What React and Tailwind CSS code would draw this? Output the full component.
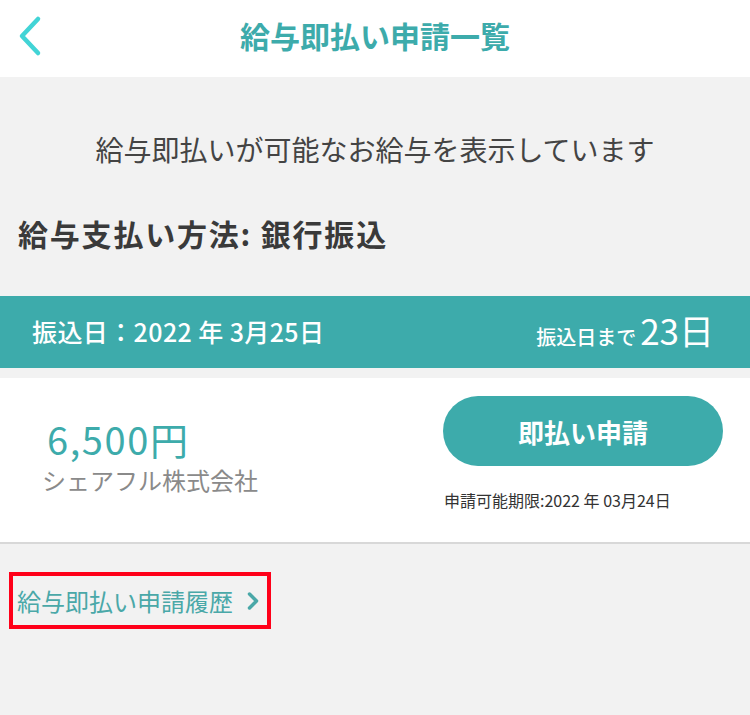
import { ChevronRight } from "lucide-react";

const font = { fontFamily: '"Noto Sans CJK JP", "Noto Sans", sans-serif' };

function BackIcon() {
  return (
    <svg width="28" height="42" viewBox="0 0 28 42" fill="none">
      <path d="M22 4 L6 21 L22 38" stroke="#42d4d6" strokeWidth="4.5" strokeLinecap="round" strokeLinejoin="round" />
    </svg>
  );
}

export default function App() {
  return (
    <div className="w-[750px] h-[715px] bg-[#f2f2f2] overflow-hidden" style={font}>
      {/* header */}
      <div className="grid grid-cols-[70px_1fr_70px] items-center h-[77px] bg-white">
        <div className="pl-[16px] pb-[6px] flex items-center">
          <BackIcon />
        </div>
        <h1 className="text-center text-[30px] font-bold text-[#3dabab] leading-none pb-[8px]">給与即払い申請一覧</h1>
        <div />
      </div>

      {/* intro */}
      <p className="pt-[52px] text-center text-[28px] leading-[40px] text-[#444]">給与即払いが可能なお給与を表示しています</p>
      <p className="mt-[44px] pl-[18px] text-[30px] leading-[40px] font-bold text-[#3a3a3a] tracking-[1.8px]">給与支払い方法: 銀行振込</p>

      {/* date band */}
      <div className="mt-[43px] h-[72px] bg-[#3dabab] flex items-center justify-between pl-[32px] pr-[36px] text-white">
        <span className="text-[25px] font-medium tracking-[0.4px]">振込日：2022 年 3月25日</span>
        <span className="flex items-baseline gap-[4px]">
          <span className="text-[20px] font-medium">振込日まで</span>
          <span className="text-[35px] leading-none">23日</span>
        </span>
      </div>

      {/* salary card */}
      <div className="mt-[10px] h-[166px] bg-white border-b-2 border-[#d8d8d8] flex justify-between pr-[27px]">
        <div className="pl-[42px] pt-[36px]">
          <p className="pl-[5px] text-[38px] leading-[50px] text-[#3dabab] tracking-[1.6px]">6,500円</p>
          <p className="text-[24px] leading-[32px] text-[#8a8a8a]">シェアフル株式会社</p>
        </div>
        <div className="pt-[18px] flex flex-col">
          <button className="w-[280px] h-[70px] rounded-full bg-[#3dabab] text-white text-[26px] font-bold">即払い申請</button>
          <p className="mt-[24px] pl-[1px] text-[16px] leading-[20px] text-[#333]">申請可能期限:2022 年 03月24日</p>
        </div>
      </div>

      {/* history link */}
      <div className="pt-[28px] pl-[9px]">
        <div className="inline-flex items-center w-[262px] h-[57px] border-4 border-[#ff0019] pl-[4px]">
          <span className="text-[24px] text-[#4aa8a8]">給与即払い申請履歴</span>
          <ChevronRight className="ml-[6px] text-[#4aa8a8]" size={28} strokeWidth={3} />
        </div>
      </div>
    </div>
  );
}
